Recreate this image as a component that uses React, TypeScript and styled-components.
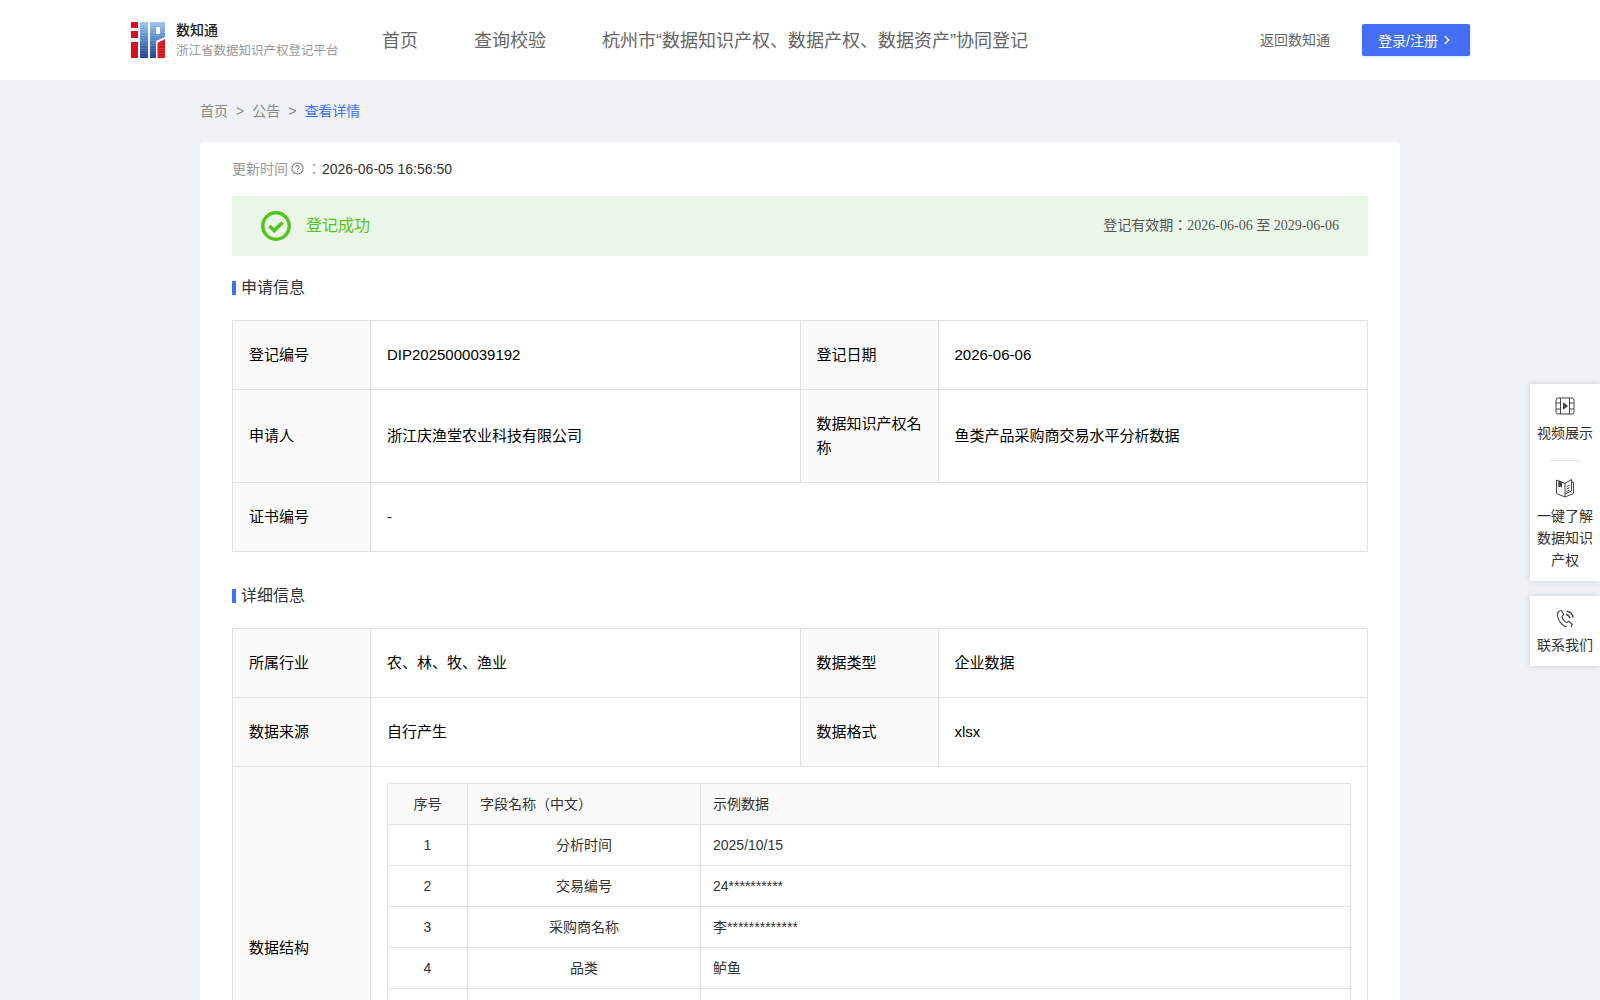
import React from "react";
import styled, { createGlobalStyle } from "styled-components";
import { ChevronRight } from "lucide-react";

const GlobalStyle = createGlobalStyle`
  html, body {
    margin: 0;
    padding: 0;
    height: 1000px;
    overflow: hidden;
    background-color: #eff3f6;
    font-family: "Liberation Sans", "Noto Sans CJK JP", sans-serif;
    line-height: 1.2;
  }
  * {
    box-sizing: border-box;
  }
`;

const Page = styled.div`
  height: 1000px;
  overflow: hidden;
  position: relative;
`;

const Header = styled.header`
  height: 80px;
  background-color: #fff;
  padding: 0 130px 0 131px;
  display: flex;
  align-items: center;
`;

const Brand = styled.div`
  display: flex;
  align-items: center;
  gap: 11px;
  width: 251px;
`;

const BrandText = styled.div`
  display: flex;
  flex-direction: column;
  gap: 3px;
`;

const BrandName = styled.div`
  font-size: 14px;
  line-height: 18px;
  font-weight: 500;
  color: #222;
`;

const BrandSub = styled.div`
  font-size: 12.5px;
  line-height: 18px;
  color: #999;
  white-space: nowrap;
`;

const Nav = styled.nav`
  display: flex;
  gap: 56px;
  flex: 1;
  padding-top: 3px;
`;

const NavItem = styled.a`
  font-size: 18px;
  color: #666;
  white-space: nowrap;
`;

const BackLink = styled.a`
  font-size: 14px;
  color: #666;
  margin-right: 32px;
`;

const LoginButton = styled.button`
  width: 108px;
  height: 32px;
  border: none;
  border-radius: 2px;
  background-color: #426ff5;
  color: #fff;
  font-family: inherit;
  font-size: 14px;
  display: flex;
  align-items: center;
  justify-content: center;
  gap: 2px;
  padding: 0 0 1px;
  box-shadow: 0 1px 3px rgba(66, 111, 245, 0.2);
`;

const Container = styled.main`
  width: 1200px;
  margin: 0 auto;
`;

const Breadcrumb = styled.div`
  height: 62px;
  display: flex;
  align-items: center;
  font-size: 14px;
  color: #8a8a8a;
`;

const Separator = styled.span`
  margin: 0 8px;
`;

const Current = styled.span`
  color: #426ff5;
`;

const Card = styled.section`
  background-color: #fff;
  border-radius: 4px 4px 0 0;
  padding: 0 32px;
`;

const UpdateRow = styled.div`
  height: 54px;
  display: flex;
  align-items: center;
  font-size: 14px;
  color: #999;

  & svg {
    margin: -1px 0 0 3px;
  }
`;

const Colon = styled.span`
  margin: 0 1px 0 3px;
`;

const UpdateValue = styled.span`
  color: #333;
`;

const StatusBar = styled.div`
  height: 60px;
  background-color: #ebf7e8;
  display: flex;
  align-items: center;
  padding: 0 29px;
`;

const StatusText = styled.span`
  margin-left: 15px;
  font-size: 16px;
  color: #52c41a;
  flex: 1;
`;

const Validity = styled.span`
  font-family: "Liberation Serif", "Noto Sans CJK JP", serif;
  font-size: 14px;
  color: #555;
`;

const SectionTitle = styled.h3`
  margin: 0;
  height: 64px;
  display: flex;
  align-items: center;
  font-size: 16px;
  font-weight: 400;
  color: #333;

  &::before {
    content: "";
    width: 4px;
    height: 14px;
    background-color: #426ff5;
    margin-right: 5px;
  }
`;

const InfoTable = styled.table<{ $spaced?: boolean }>`
  width: 100%;
  table-layout: fixed;
  border-collapse: collapse;
  margin-bottom: ${(p) => (p.$spaced ? "12px" : "0")};
  font-size: 15px;
  line-height: 24px;
  color: #000;
`;

const LabelCell = styled.th`
  width: 138px;
  border: 1px solid #e2e2e2;
  background-color: #fafafa;
  font-weight: 400;
  text-align: left;
  padding: 0 16px;
`;

const ValueCell = styled.td`
  border: 1px solid #e2e2e2;
  padding: 0 16px;
`;

const Row = styled.tr<{ $h: number }>`
  height: ${(p) => p.$h}px;
`;

const NestedCell = styled.td`
  border: 1px solid #e2e2e2;
  padding: 16px;
`;

const FieldTable = styled.table`
  width: 100%;
  table-layout: fixed;
  border-collapse: collapse;
  font-size: 14px;
  color: #333;
`;

const FieldHead = styled.th<{ $w?: number; $left?: boolean }>`
  ${(p) => (p.$w ? `width: ${p.$w}px;` : "")}
  height: 41px;
  border: 1px solid #e2e2e2;
  background-color: #fafafa;
  font-weight: 400;
  text-align: ${(p) => (p.$left ? "left" : "center")};
  padding: 0 12px;
`;

const FieldCell = styled.td<{ $left?: boolean }>`
  height: 41px;
  border: 1px solid #e2e2e2;
  text-align: ${(p) => (p.$left ? "left" : "center")};
  padding: 0 12px;
`;

const SideBar = styled.aside`
  position: absolute;
  right: 0;
  top: 384px;
  width: 70px;
  display: flex;
  flex-direction: column;
  gap: 15px;
`;

const SidePanel = styled.div`
  background-color: #fff;
  box-shadow: 0 0 6px rgba(0, 0, 0, 0.16);
  display: flex;
  flex-direction: column;
  align-items: center;
  padding: 13px 0 10px;
`;

const SideItem = styled.div`
  display: flex;
  flex-direction: column;
  align-items: center;
  gap: 7px;
  font-size: 14px;
  line-height: 22px;
  color: #333;
  text-align: center;
`;

const SideLabel = styled.div`
  width: 58px;
`;

const SideDivider = styled.div`
  width: 32px;
  height: 1px;
  background-color: #e4e4e4;
  margin: 16px 0 17px;
`;

const fields = [
  ["1", "分析时间", "2025/10/15"],
  ["2", "交易编号", "24**********"],
  ["3", "采购商名称", "李*************"],
  ["4", "品类", "鲈鱼"],
  ["", "", ""],
  ["", "", ""],
  ["", "", ""],
];

function Logo() {
  const stripes = Array.from({ length: 14 }, (_, i) => i * 2.6);
  return (
    <svg width="34" height="36" viewBox="0 0 34 36">
      <defs>
        <linearGradient id="logoBlue" x1="0" y1="0" x2="0" y2="1">
          <stop offset="0" stopColor="#9cc4ee" />
          <stop offset="0.45" stopColor="#5587c8" />
          <stop offset="1" stopColor="#20398c" />
        </linearGradient>
      </defs>
      <path d="M0 0h7v6H0zM0 9h7v7H0zM0 20h7v16H0z" fill="#d9101a" />
      <rect x="9" y="0" width="8" height="36" fill="url(#logoBlue)" />
      <path
        d="M19 0h15v15l-9 4v17h-6zM25 5v7h4V5z"
        fill="url(#logoBlue)"
        fillRule="evenodd"
      />
      <path d="M26.500 36V21L34 17v19z" fill="#d9101a" />
      {stripes.map((y) => (
        <rect
          key={y}
          x="9"
          y={y}
          width="25"
          height="0.6"
          fill="#fff"
          opacity="0.25"
        />
      ))}
    </svg>
  );
}

function HelpIcon() {
  return (
    <svg width="13" height="13" viewBox="0 0 14 14" fill="none" stroke="#777" strokeWidth="1.100">
      <circle cx="7" cy="7" r="6" />
      <path d="M5.200 5.600a1.800 1.800 0 1 1 2.600 1.600c-.5.3-.8.6-.8 1.200" />
      <path d="M7 9.500v1" />
    </svg>
  );
}

function SuccessIcon() {
  return (
    <svg width="30" height="30" viewBox="0 0 30 30" fill="none" stroke="#52c41a">
      <circle cx="15" cy="15" r="13.200" strokeWidth="3.400" />
      <path d="M8.500 15l4.700 4.500 8.300-8" strokeWidth="3.600" />
    </svg>
  );
}

function VideoIcon() {
  return (
    <svg width="20" height="18" viewBox="0 0 20 18" fill="none" stroke="#444" strokeWidth="1">
      <rect x="1" y="1" width="18" height="16" rx="2" />
      <path d="M5.500 1v16M14.500 1v16M1 6h4.500M1 12h4.500M14.500 6H19M14.500 12H19" />
      <path d="M8.500 6l4 3-4 3z" fill="#444" />
    </svg>
  );
}

function BookIcon() {
  return (
    <svg width="20" height="20" viewBox="0 0 20 20" fill="none" stroke="#444" strokeWidth="1">
      <path d="M1.500 2l8.500 3.500L16.500 1.500v2.500h2v11.500L10 19l-8.500-3.500z" />
      <path d="M3.800 3l2.700 1.100v5l-1.300-1-1.400.8z" fill="#444" />
      <path d="M16.500 1.500v11.500L10 16M10 5.500V19" />
      <path d="M11.500 8.500l3.200-1.300M11.500 11l3.200-1.300M11.500 13.500l3.200-1.300" />
    </svg>
  );
}

function PhoneIcon() {
  return (
    <svg width="19" height="18" viewBox="1.500 0.500 17 16.500" fill="none" stroke="#444" strokeWidth="1">
      <path d="M4 2.500l2.300-.8 2 4-1.600 1.500c.6 2.500 2.400 4.700 4.600 5.800l1.700-1.300 3.200 3-1 2.300c-1 .8-2.400 1-3.800.4C6.500 15.500 3 10.800 2.500 6c-.1-1.400.5-2.800 1.500-3.500z" />
      <path d="M10.500 5.500c1.800.3 3.200 1.700 3.600 3.500M11 2.500c3 .3 5.500 2.800 6 6" strokeWidth="1.300" />
    </svg>
  );
}

export default function App() {
  return (
    <Page>
      <GlobalStyle />
      <Header>
        <Brand>
          <Logo />
          <BrandText>
            <BrandName>数知通</BrandName>
            <BrandSub>浙江省数据知识产权登记平台</BrandSub>
          </BrandText>
        </Brand>
        <Nav>
          <NavItem>首页</NavItem>
          <NavItem>查询校验</NavItem>
          <NavItem>杭州市“数据知识产权、数据产权、数据资产”协同登记</NavItem>
        </Nav>
        <BackLink>返回数知通</BackLink>
        <LoginButton>
          登录/注册
          <ChevronRight size={14} strokeWidth={2.400} />
        </LoginButton>
      </Header>
      <Container>
        <Breadcrumb>
          首页
          <Separator>&gt;</Separator>
          公告
          <Separator>&gt;</Separator>
          <Current>查看详情</Current>
        </Breadcrumb>
        <Card>
          <UpdateRow>
            更新时间
            <HelpIcon />
            <Colon>：</Colon>
            <UpdateValue>2026-06-05 16:56:50</UpdateValue>
          </UpdateRow>
          <StatusBar>
            <SuccessIcon />
            <StatusText>登记成功</StatusText>
            <Validity>登记有效期：2026-06-06 至 2029-06-06</Validity>
          </StatusBar>
          <SectionTitle>申请信息</SectionTitle>
          <InfoTable $spaced>
            <tbody>
              <Row $h={69}>
                <LabelCell>登记编号</LabelCell>
                <ValueCell>DIP2025000039192</ValueCell>
                <LabelCell>登记日期</LabelCell>
                <ValueCell>2026-06-06</ValueCell>
              </Row>
              <Row $h={93}>
                <LabelCell>申请人</LabelCell>
                <ValueCell>浙江庆渔堂农业科技有限公司</ValueCell>
                <LabelCell>数据知识产权名称</LabelCell>
                <ValueCell>鱼类产品采购商交易水平分析数据</ValueCell>
              </Row>
              <Row $h={69}>
                <LabelCell>证书编号</LabelCell>
                <ValueCell colSpan={3}>-</ValueCell>
              </Row>
            </tbody>
          </InfoTable>
          <SectionTitle>详细信息</SectionTitle>
          <InfoTable>
            <tbody>
              <Row $h={69}>
                <LabelCell>所属行业</LabelCell>
                <ValueCell>农、林、牧、渔业</ValueCell>
                <LabelCell>数据类型</LabelCell>
                <ValueCell>企业数据</ValueCell>
              </Row>
              <Row $h={69}>
                <LabelCell>数据来源</LabelCell>
                <ValueCell>自行产生</ValueCell>
                <LabelCell>数据格式</LabelCell>
                <ValueCell>xlsx</ValueCell>
              </Row>
              <tr>
                <LabelCell>数据结构</LabelCell>
                <NestedCell colSpan={3}>
                  <FieldTable>
                    <thead>
                      <tr>
                        <FieldHead $w={80}>序号</FieldHead>
                        <FieldHead $w={233} $left>
                          字段名称（中文）
                        </FieldHead>
                        <FieldHead $left>示例数据</FieldHead>
                      </tr>
                    </thead>
                    <tbody>
                      {fields.map((f, i) => (
                        <tr key={i}>
                          <FieldCell>{f[0]}</FieldCell>
                          <FieldCell>{f[1]}</FieldCell>
                          <FieldCell $left>{f[2]}</FieldCell>
                        </tr>
                      ))}
                    </tbody>
                  </FieldTable>
                </NestedCell>
              </tr>
            </tbody>
          </InfoTable>
        </Card>
      </Container>
      <SideBar>
        <SidePanel>
          <SideItem>
            <VideoIcon />
            <SideLabel>视频展示</SideLabel>
          </SideItem>
          <SideDivider />
          <SideItem>
            <BookIcon />
            <SideLabel>一键了解数据知识产权</SideLabel>
          </SideItem>
        </SidePanel>
        <SidePanel>
          <SideItem>
            <PhoneIcon />
            <SideLabel>联系我们</SideLabel>
          </SideItem>
        </SidePanel>
      </SideBar>
    </Page>
  );
}
